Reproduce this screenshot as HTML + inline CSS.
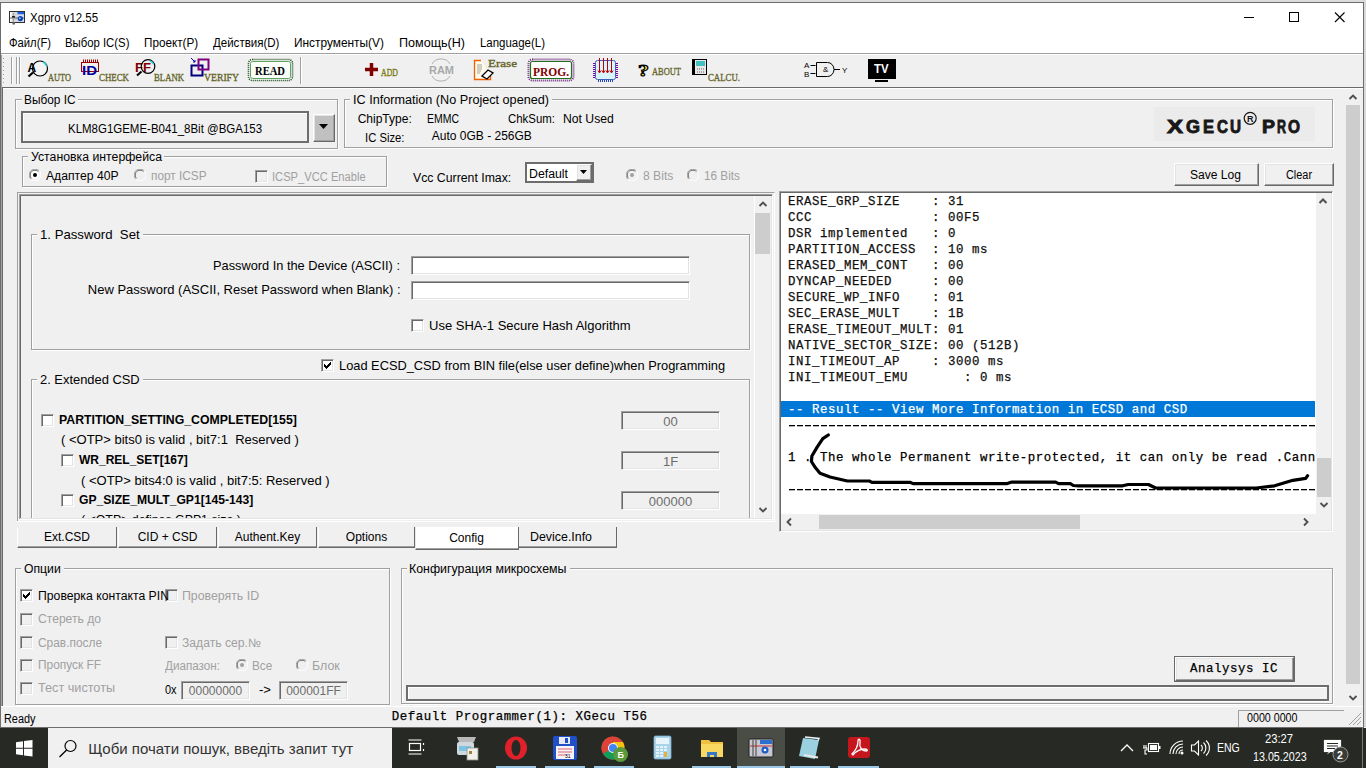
<!DOCTYPE html>
<html><head><meta charset="utf-8">
<style>
*{margin:0;padding:0;box-sizing:border-box}
html,body{width:1366px;height:768px;overflow:hidden;background:#f0f0f0;position:relative;font-family:"Liberation Sans",sans-serif;color:#000}
.a{position:absolute}
.t{position:absolute;white-space:pre}
</style></head><body>
<div class="a" style="left:0px;top:0px;width:1366px;height:2px;background:#dcdcdc"></div>
<div class="a" style="left:1364px;top:0px;width:2px;height:727px;background:#d9d9d9"></div>
<div class="a" style="left:0px;top:2px;width:1364px;height:725px;border:1px solid #6d6d6d;box-shadow:inset 1px 0 0 #a0a0a0;background:#f0f0f0"></div>
<div class="a" style="left:1px;top:3px;width:1362px;height:50px;background:#fff"></div>
<div class="a" style="left:1px;top:53px;width:1362px;height:1px;background:#a0a0a0"></div>
<div class="a" style="left:1px;top:54px;width:1362px;height:1px;background:#fff"></div>
<div class="a" style="left:2px;top:87px;width:1361px;height:1px;background:#696969"></div>
<div class="a" style="left:2px;top:87px;width:1px;height:620px;background:#696969"></div>
<div class="a" style="left:3px;top:88px;width:1360px;height:1px;background:#fff"></div>
<svg class="a" style="left:0;top:0" width="40" height="30" viewBox="0 0 40 30">
<rect x="9.5" y="11.5" width="15" height="11" fill="#d8d8dc" stroke="#303030" stroke-width="1"/>
<rect x="10" y="12" width="1.5" height="10" fill="#fff"/>
<rect x="17.5" y="12" width="6.5" height="2.5" fill="#1a60e0"/>
<rect x="17.5" y="14.5" width="6.5" height="7.5" fill="#d0dcf0"/>
<path d="M10 18 H24" stroke="#505050" stroke-width="0.8"/>
<circle cx="20.3" cy="18.6" r="2.6" fill="#0a40b0"/><circle cx="19.8" cy="18.2" r="1" fill="#80c8ff"/>
<rect x="12" y="16" width="3" height="1.6" fill="#202020"/>
<rect x="12.5" y="22" width="2.5" height="2.5" fill="#606060"/>
<path d="M13.5 13v3 M13.5 18v4" stroke="#a0a0a0" stroke-width="1.2"/>
</svg>
<svg class="a" style="left:1236px;top:8px" width="120" height="20">
<path d="M8 9.5 H18" stroke="#000" stroke-width="1"/>
<rect x="53.5" y="4.5" width="9" height="9" fill="none" stroke="#000" stroke-width="1"/>
<path d="M99 4.5 L108.5 14 M108.5 4.5 L99 14" stroke="#000" stroke-width="1.1"/>
</svg>
<div class="a" style="left:16px;top:100px;width:323px;height:50px;border:1px solid #fff"></div>
<div class="a" style="left:15px;top:99px;width:323px;height:50px;border:1px solid #a0a0a0"></div>
<div class="a" style="left:22px;top:98px;width:56px;height:4px;background:#f0f0f0"></div>
<div class="a" style="left:21px;top:111px;width:288px;height:32px;border:2px solid #6d6d6d;box-shadow:inset 1px 1px 0 #fff;background:#f0f0f0"></div>
<div class="a" style="left:313px;top:114px;width:22px;height:28px;background:#c0c0c0;border-style:solid;border-width:1px;border-color:#fff #696969 #696969 #fff;box-shadow:inset -1px -1px 0 #a0a0a0,inset 1px 1px 0 #e3e3e3"></div>
<svg class="a" style="left:319px;top:124px" width="10" height="6"><path d="M0 0 H9 L4.5 5 Z" fill="#000"/></svg>
<div class="a" style="left:23px;top:157px;width:365px;height:31px;border:1px solid #fff"></div>
<div class="a" style="left:22px;top:156px;width:365px;height:31px;border:1px solid #a0a0a0"></div>
<div class="a" style="left:28px;top:155px;width:136px;height:4px;background:#f0f0f0"></div>
<svg class="a" style="left:29px;top:169px" width="12" height="12"><path d="M10.2 1.8 A5.5 5.5 0 0 0 1.8 10.2" stroke="#a0a0a0" fill="none"/><path d="M9.4 2.6 A4.5 4.5 0 0 0 2.6 9.4" stroke="#696969" fill="none"/><path d="M1.8 10.2 A5.5 5.5 0 0 0 10.2 1.8" stroke="#fff" fill="none"/><circle cx="6" cy="6" r="4" fill="#fff"/><circle cx="6" cy="6" r="2" fill="#000"/></svg>
<svg class="a" style="left:134px;top:169px" width="12" height="12"><path d="M10.2 1.8 A5.5 5.5 0 0 0 1.8 10.2" stroke="#a0a0a0" fill="none"/><path d="M9.4 2.6 A4.5 4.5 0 0 0 2.6 9.4" stroke="#696969" fill="none"/><path d="M1.8 10.2 A5.5 5.5 0 0 0 10.2 1.8" stroke="#fff" fill="none"/><circle cx="6" cy="6" r="4" fill="#f0f0f0"/></svg>
<div class="a" style="left:255px;top:170px;width:13px;height:13px;background:#f0f0f0;border-style:solid;border-width:1px;border-color:#a0a0a0 #fff #fff #a0a0a0;box-shadow:inset 1px 1px 0 #696969,inset -1px -1px 0 #e3e3e3"></div>
<div class="a" style="left:345px;top:100px;width:989px;height:49px;border:1px solid #fff"></div>
<div class="a" style="left:344px;top:99px;width:989px;height:49px;border:1px solid #a0a0a0"></div>
<div class="a" style="left:350px;top:98px;width:202px;height:4px;background:#f0f0f0"></div>
<div class="a" style="left:1154px;top:107px;width:161px;height:34px;background:#ebebeb"></div>
<svg class="a" style="left:1150px;top:105px" width="170" height="40" viewBox="1150 105 170 40">
<text x="1167" y="133.4" font-family="Liberation Sans" font-weight="bold" font-size="18" fill="#181818" stroke="#181818" stroke-width="0.9" textLength="16" lengthAdjust="spacingAndGlyphs">X</text>
<text x="1186" y="133.4" font-family="Liberation Sans" font-weight="bold" font-size="18" fill="#181818" stroke="#181818" stroke-width="0.9" textLength="14" lengthAdjust="spacingAndGlyphs">G</text>
<text x="1203" y="133.4" font-family="Liberation Sans" font-weight="bold" font-size="18" fill="#181818" stroke="#181818" stroke-width="0.9" textLength="11" lengthAdjust="spacingAndGlyphs">E</text>
<text x="1217" y="133.4" font-family="Liberation Sans" font-weight="bold" font-size="18" fill="#181818" stroke="#181818" stroke-width="0.9" textLength="11" lengthAdjust="spacingAndGlyphs">C</text>
<text x="1230" y="133.4" font-family="Liberation Sans" font-weight="bold" font-size="18" fill="#181818" stroke="#181818" stroke-width="0.9" textLength="11" lengthAdjust="spacingAndGlyphs">U</text>
<text x="1262" y="133.4" font-family="Liberation Sans" font-weight="bold" font-size="18" fill="#181818" stroke="#181818" stroke-width="0.9" textLength="13" lengthAdjust="spacingAndGlyphs">P</text>
<text x="1277" y="133.4" font-family="Liberation Sans" font-weight="bold" font-size="18" fill="#181818" stroke="#181818" stroke-width="0.9" textLength="9" lengthAdjust="spacingAndGlyphs">R</text>
<text x="1288" y="133.4" font-family="Liberation Sans" font-weight="bold" font-size="18" fill="#181818" stroke="#181818" stroke-width="0.9" textLength="12" lengthAdjust="spacingAndGlyphs">O</text>
<circle cx="1250.2" cy="118.3" r="6" fill="none" stroke="#161616" stroke-width="1.2"/>
<text x="1246.9" y="121.6" font-family="Liberation Sans" font-weight="bold" font-size="9" fill="#161616">R</text>
</svg>
<div class="a" style="left:525px;top:162px;width:69px;height:21px;border:2px solid #6d6d6d;box-shadow:inset 1px 1px 0 #fff;background:#fff"></div>
<div class="a" style="left:576px;top:164px;width:16px;height:17px;background:#f0f0f0;border-style:solid;border-width:1px;border-color:#fff #696969 #696969 #fff;box-shadow:inset -1px -1px 0 #a0a0a0,inset 1px 1px 0 #e3e3e3"></div>
<svg class="a" style="left:580px;top:170px" width="8" height="5"><path d="M0 0 H7 L3.5 4 Z" fill="#000"/></svg>
<svg class="a" style="left:626px;top:169px" width="12" height="12"><path d="M10.2 1.8 A5.5 5.5 0 0 0 1.8 10.2" stroke="#a0a0a0" fill="none"/><path d="M9.4 2.6 A4.5 4.5 0 0 0 2.6 9.4" stroke="#696969" fill="none"/><path d="M1.8 10.2 A5.5 5.5 0 0 0 10.2 1.8" stroke="#fff" fill="none"/><circle cx="6" cy="6" r="4" fill="#f0f0f0"/><circle cx="6" cy="6" r="2" fill="#a0a0a0"/></svg>
<svg class="a" style="left:687px;top:169px" width="12" height="12"><path d="M10.2 1.8 A5.5 5.5 0 0 0 1.8 10.2" stroke="#a0a0a0" fill="none"/><path d="M9.4 2.6 A4.5 4.5 0 0 0 2.6 9.4" stroke="#696969" fill="none"/><path d="M1.8 10.2 A5.5 5.5 0 0 0 10.2 1.8" stroke="#fff" fill="none"/><circle cx="6" cy="6" r="4" fill="#f0f0f0"/></svg>
<div class="a" style="left:1174px;top:163px;width:85px;height:23px;background:#f0f0f0;border-style:solid;border-width:1px;border-color:#fff #696969 #696969 #fff;box-shadow:inset -1px -1px 0 #a0a0a0,inset 1px 1px 0 #e3e3e3"></div>
<div class="a" style="left:1264px;top:163px;width:70px;height:23px;background:#f0f0f0;border-style:solid;border-width:1px;border-color:#fff #696969 #696969 #fff;box-shadow:inset -1px -1px 0 #a0a0a0,inset 1px 1px 0 #e3e3e3"></div>
<div class="a" style="left:17px;top:192px;width:758px;height:330px;border-style:solid;border-width:1px;border-color:#a0a0a0 #fff #fff #a0a0a0"></div>
<div class="a" style="left:19px;top:194px;width:754px;height:326px;border-style:solid;border-width:1px;border-color:#a0a0a0 #fff #fff #a0a0a0;box-shadow:inset 1px 1px 0 #696969,inset -1px -1px 0 #e3e3e3;background:#f0f0f0"></div>
<div class="a" style="left:754px;top:196px;width:17px;height:322px;background:#f0f0f0;border-left:1px solid #fff"></div>
<div class="a" style="left:755px;top:213px;width:15px;height:41px;background:#cdcdcd"></div>
<svg class="a" style="left:757px;top:200px" width="12" height="8"><path d="M2.5 6 L6 2.5 L9.5 6" stroke="#505050" stroke-width="1.9" fill="none"/></svg>
<svg class="a" style="left:757px;top:506px" width="12" height="8"><path d="M2.5 2 L6 5.5 L9.5 2" stroke="#505050" stroke-width="1.9" fill="none"/></svg>
<div class="a" style="left:32px;top:235px;width:719px;height:116px;border:1px solid #fff"></div>
<div class="a" style="left:31px;top:234px;width:719px;height:116px;border:1px solid #a0a0a0"></div>
<div class="a" style="left:37px;top:233px;width:106px;height:4px;background:#f0f0f0"></div>
<div class="a" style="left:411px;top:256px;width:279px;height:19px;background:#fff;border-style:solid;border-width:1px;border-color:#a0a0a0 #fff #fff #a0a0a0;box-shadow:inset 1px 1px 0 #696969,inset -1px -1px 0 #e3e3e3"></div>
<div class="a" style="left:411px;top:281px;width:279px;height:19px;background:#fff;border-style:solid;border-width:1px;border-color:#a0a0a0 #fff #fff #a0a0a0;box-shadow:inset 1px 1px 0 #696969,inset -1px -1px 0 #e3e3e3"></div>
<div class="a" style="left:411px;top:319px;width:13px;height:13px;background:#fff;border-style:solid;border-width:1px;border-color:#a0a0a0 #fff #fff #a0a0a0;box-shadow:inset 1px 1px 0 #696969,inset -1px -1px 0 #e3e3e3"></div>
<div class="a" style="left:321px;top:359px;width:13px;height:13px;background:#fff;border-style:solid;border-width:1px;border-color:#a0a0a0 #fff #fff #a0a0a0;box-shadow:inset 1px 1px 0 #696969,inset -1px -1px 0 #e3e3e3"></div>
<svg class="a" style="left:321px;top:359px" width="13" height="13" shape-rendering="crispEdges"><path d="M9 3h1v3h-1zM8 4h1v3h-1zM7 5h1v3h-1zM6 6h1v3h-1zM5 7h1v3h-1zM4 6h1v3h-1zM3 5h1v3h-1z" fill="#000"/></svg>
<div class="a" style="left:32px;top:380px;width:719px;height:147px;border:1px solid #fff"></div>
<div class="a" style="left:31px;top:379px;width:719px;height:147px;border:1px solid #a0a0a0"></div>
<div class="a" style="left:37px;top:378px;width:106px;height:4px;background:#f0f0f0"></div>
<div class="a" style="left:41px;top:414px;width:13px;height:13px;background:#fff;border-style:solid;border-width:1px;border-color:#a0a0a0 #fff #fff #a0a0a0;box-shadow:inset 1px 1px 0 #696969,inset -1px -1px 0 #e3e3e3"></div>
<div class="a" style="left:61px;top:454px;width:13px;height:13px;background:#fff;border-style:solid;border-width:1px;border-color:#a0a0a0 #fff #fff #a0a0a0;box-shadow:inset 1px 1px 0 #696969,inset -1px -1px 0 #e3e3e3"></div>
<div class="a" style="left:61px;top:494px;width:13px;height:13px;background:#fff;border-style:solid;border-width:1px;border-color:#a0a0a0 #fff #fff #a0a0a0;box-shadow:inset 1px 1px 0 #696969,inset -1px -1px 0 #e3e3e3"></div>
<div class="a" style="left:621px;top:411px;width:99px;height:19px;background:#f0f0f0;border-style:solid;border-width:1px;border-color:#a0a0a0 #fff #fff #a0a0a0;box-shadow:inset 1px 1px 0 #696969,inset -1px -1px 0 #e3e3e3"></div>
<div class="a" style="left:621px;top:451px;width:99px;height:19px;background:#f0f0f0;border-style:solid;border-width:1px;border-color:#a0a0a0 #fff #fff #a0a0a0;box-shadow:inset 1px 1px 0 #696969,inset -1px -1px 0 #e3e3e3"></div>
<div class="a" style="left:621px;top:491px;width:99px;height:19px;background:#f0f0f0;border-style:solid;border-width:1px;border-color:#a0a0a0 #fff #fff #a0a0a0;box-shadow:inset 1px 1px 0 #696969,inset -1px -1px 0 #e3e3e3"></div>
<div class="a" style="left:17px;top:527px;width:100px;height:21px;background:#f0f0f0;border-left:1px solid #fff;border-right:1px solid #696969;border-bottom:1px solid #696969;box-shadow:inset 0 -1px 0 #a0a0a0"></div>
<div class="a" style="left:118px;top:527px;width:99px;height:21px;background:#f0f0f0;border-left:1px solid #fff;border-right:1px solid #696969;border-bottom:1px solid #696969;box-shadow:inset 0 -1px 0 #a0a0a0"></div>
<div class="a" style="left:218px;top:527px;width:99px;height:21px;background:#f0f0f0;border-left:1px solid #fff;border-right:1px solid #696969;border-bottom:1px solid #696969;box-shadow:inset 0 -1px 0 #a0a0a0"></div>
<div class="a" style="left:318px;top:527px;width:97px;height:21px;background:#f0f0f0;border-left:1px solid #fff;border-right:1px solid #696969;border-bottom:1px solid #696969;box-shadow:inset 0 -1px 0 #a0a0a0"></div>
<div class="a" style="left:518px;top:527px;width:99px;height:21px;background:#f0f0f0;border-left:1px solid #fff;border-right:1px solid #696969;border-bottom:1px solid #696969;box-shadow:inset 0 -1px 0 #a0a0a0"></div>
<div class="a" style="left:415px;top:526px;width:104px;height:24px;background:#fff;border-left:1px solid #e8e8e8;border-right:1px solid #696969;border-bottom:1px solid #696969;box-shadow:inset 0 -1px 0 #a0a0a0"></div>
<div class="a" style="left:779px;top:191px;width:554px;height:341px;background:#fff;border-style:solid;border-width:1px;border-color:#a0a0a0 #fff #fff #a0a0a0;box-shadow:inset 1px 1px 0 #696969,inset -1px -1px 0 #e3e3e3"></div>
<div class="a" style="left:1316px;top:193px;width:15px;height:337px;background:#f0f0f0"></div>
<div class="a" style="left:1317px;top:458px;width:14px;height:39px;background:#cdcdcd"></div>
<svg class="a" style="left:1317px;top:197px" width="12" height="8"><path d="M2.5 6 L6 2.5 L9.5 6" stroke="#505050" stroke-width="2" fill="none"/></svg>
<svg class="a" style="left:1318px;top:501px" width="12" height="8"><path d="M2.5 2 L6 5.5 L9.5 2" stroke="#505050" stroke-width="1.9" fill="none"/></svg>
<div class="a" style="left:781px;top:514px;width:535px;height:16px;background:#f0f0f0"></div>
<div class="a" style="left:819px;top:515px;width:261px;height:14px;background:#cdcdcd"></div>
<svg class="a" style="left:785px;top:516px" width="8" height="12"><path d="M6 2.5 L2.5 6 L6 9.5" stroke="#505050" stroke-width="1.9" fill="none"/></svg>
<svg class="a" style="left:1302px;top:516px" width="8" height="12"><path d="M2 2.5 L5.5 6 L2 9.5" stroke="#505050" stroke-width="1.9" fill="none"/></svg>
<div class="a" style="left:781px;top:401px;width:534px;height:16px;background:#0078d7"></div>
<div class="a" style="left:789px;top:425px;width:527px;height:1px;background:repeating-linear-gradient(90deg,#000 0,#000 6px,transparent 6px,transparent 8px)"></div>
<div class="a" style="left:789px;top:426px;width:527px;height:1px;background:repeating-linear-gradient(90deg,#000 0,#000 6px,transparent 6px,transparent 8px);opacity:.3"></div>
<div class="a" style="left:789px;top:489px;width:527px;height:1px;background:repeating-linear-gradient(90deg,#000 0,#000 6px,transparent 6px,transparent 8px)"></div>
<div class="a" style="left:789px;top:490px;width:527px;height:1px;background:repeating-linear-gradient(90deg,#000 0,#000 6px,transparent 6px,transparent 8px);opacity:.3"></div>
<div class="a" style="left:1345px;top:89px;width:16px;height:617px;background:#f0f0f0"></div>
<div class="a" style="left:1346px;top:105px;width:14px;height:579px;background:#cdcdcd"></div>
<svg class="a" style="left:1347px;top:93px" width="12" height="8"><path d="M2.5 6 L6 2.5 L9.5 6" stroke="#505050" stroke-width="1.9" fill="none"/></svg>
<svg class="a" style="left:1347px;top:694px" width="12" height="8"><path d="M2.5 2 L6 5.5 L9.5 2" stroke="#505050" stroke-width="1.9" fill="none"/></svg>
<div class="a" style="left:16px;top:569px;width:375px;height:137px;border:1px solid #fff"></div>
<div class="a" style="left:15px;top:568px;width:375px;height:137px;border:1px solid #a0a0a0"></div>
<div class="a" style="left:21px;top:567px;width:43px;height:4px;background:#f0f0f0"></div>
<div class="a" style="left:20px;top:589px;width:13px;height:13px;background:#fff;border-style:solid;border-width:1px;border-color:#a0a0a0 #fff #fff #a0a0a0;box-shadow:inset 1px 1px 0 #696969,inset -1px -1px 0 #e3e3e3"></div>
<svg class="a" style="left:20px;top:589px" width="13" height="13" shape-rendering="crispEdges"><path d="M9 3h1v3h-1zM8 4h1v3h-1zM7 5h1v3h-1zM6 6h1v3h-1zM5 7h1v3h-1zM4 6h1v3h-1zM3 5h1v3h-1z" fill="#000"/></svg>
<div class="a" style="left:165px;top:589px;width:13px;height:13px;background:#f0f0f0;border-style:solid;border-width:1px;border-color:#a0a0a0 #fff #fff #a0a0a0;box-shadow:inset 1px 1px 0 #696969,inset -1px -1px 0 #e3e3e3"></div>
<div class="a" style="left:20px;top:613px;width:13px;height:13px;background:#f0f0f0;border-style:solid;border-width:1px;border-color:#a0a0a0 #fff #fff #a0a0a0;box-shadow:inset 1px 1px 0 #696969,inset -1px -1px 0 #e3e3e3"></div>
<div class="a" style="left:20px;top:636px;width:13px;height:13px;background:#f0f0f0;border-style:solid;border-width:1px;border-color:#a0a0a0 #fff #fff #a0a0a0;box-shadow:inset 1px 1px 0 #696969,inset -1px -1px 0 #e3e3e3"></div>
<div class="a" style="left:20px;top:659px;width:13px;height:13px;background:#f0f0f0;border-style:solid;border-width:1px;border-color:#a0a0a0 #fff #fff #a0a0a0;box-shadow:inset 1px 1px 0 #696969,inset -1px -1px 0 #e3e3e3"></div>
<div class="a" style="left:20px;top:682px;width:13px;height:13px;background:#f0f0f0;border-style:solid;border-width:1px;border-color:#a0a0a0 #fff #fff #a0a0a0;box-shadow:inset 1px 1px 0 #696969,inset -1px -1px 0 #e3e3e3"></div>
<div class="a" style="left:165px;top:636px;width:13px;height:13px;background:#f0f0f0;border-style:solid;border-width:1px;border-color:#a0a0a0 #fff #fff #a0a0a0;box-shadow:inset 1px 1px 0 #696969,inset -1px -1px 0 #e3e3e3"></div>
<svg class="a" style="left:236px;top:659px" width="12" height="12"><path d="M10.2 1.8 A5.5 5.5 0 0 0 1.8 10.2" stroke="#a0a0a0" fill="none"/><path d="M9.4 2.6 A4.5 4.5 0 0 0 2.6 9.4" stroke="#696969" fill="none"/><path d="M1.8 10.2 A5.5 5.5 0 0 0 10.2 1.8" stroke="#fff" fill="none"/><circle cx="6" cy="6" r="4" fill="#f0f0f0"/><circle cx="6" cy="6" r="2" fill="#a0a0a0"/></svg>
<svg class="a" style="left:296px;top:659px" width="12" height="12"><path d="M10.2 1.8 A5.5 5.5 0 0 0 1.8 10.2" stroke="#a0a0a0" fill="none"/><path d="M9.4 2.6 A4.5 4.5 0 0 0 2.6 9.4" stroke="#696969" fill="none"/><path d="M1.8 10.2 A5.5 5.5 0 0 0 10.2 1.8" stroke="#fff" fill="none"/><circle cx="6" cy="6" r="4" fill="#f0f0f0"/></svg>
<div class="a" style="left:181px;top:681px;width:69px;height:19px;background:#f0f0f0;border-style:solid;border-width:1px;border-color:#a0a0a0 #fff #fff #a0a0a0;box-shadow:inset 1px 1px 0 #696969,inset -1px -1px 0 #e3e3e3"></div>
<div class="a" style="left:279px;top:681px;width:69px;height:19px;background:#f0f0f0;border-style:solid;border-width:1px;border-color:#a0a0a0 #fff #fff #a0a0a0;box-shadow:inset 1px 1px 0 #696969,inset -1px -1px 0 #e3e3e3"></div>
<div class="a" style="left:402px;top:569px;width:932px;height:136px;border:1px solid #fff"></div>
<div class="a" style="left:401px;top:568px;width:932px;height:136px;border:1px solid #a0a0a0"></div>
<div class="a" style="left:407px;top:567px;width:163px;height:4px;background:#f0f0f0"></div>
<div class="a" style="left:1174px;top:656px;width:121px;height:26px;border:1px solid #696969"></div>
<div class="a" style="left:1175px;top:657px;width:119px;height:24px;background:#f0f0f0;border-style:solid;border-width:1px;border-color:#fff #696969 #696969 #fff;box-shadow:inset -1px -1px 0 #a0a0a0,inset 1px 1px 0 #e3e3e3"></div>
<div class="a" style="left:406px;top:685px;width:923px;height:16px;border:2px solid #6d6d6d;box-shadow:inset 1px 1px 0 #fff,0 1px 0 #fff;background:#f0f0f0"></div>
<div class="a" style="left:1px;top:706px;width:1362px;height:21px;background:#f0f0f0;border-top:1px solid #fff"></div>
<div class="a" style="left:1238px;top:710px;width:106px;height:17px;border-top:1px solid #a0a0a0;border-left:1px solid #a0a0a0"></div>
<svg class="a" style="left:1348px;top:712px" width="14" height="14"><path d="M13 1 L1 13 M13 5 L5 13 M13 9 L9 13" stroke="#a0a0a0" stroke-width="1" fill="none"/></svg>
<div class="a" style="left:0px;top:727px;width:1364px;height:1px;background:#6d6d6d"></div>
<div class="a" style="left:0px;top:728px;width:1366px;height:40px;background:#272a24"></div>
<div class="a" style="left:48px;top:728px;width:344px;height:40px;background:#f0f0f0"></div>
<svg class="a" style="left:16px;top:740px" width="17" height="17"><path d="M0 2.2 L7 1.2 V7.8 H0Z M8 1 L16.5 0 V7.8 H8Z M0 8.8 H7 V15.3 L0 14.3Z M8 8.8 H16.5 V16.5 L8 15.4Z" fill="#fff"/></svg>
<svg class="a" style="left:58px;top:739px" width="20" height="19"><circle cx="12.5" cy="7" r="5.5" stroke="#000" stroke-width="1.2" fill="none"/><path d="M8.6 11 L1.5 18" stroke="#000" stroke-width="1.3"/></svg>
<svg class="a" style="left:406px;top:739px" width="19" height="16"><path d="M2.5 1 H15.5 M2.5 15 H15.5" stroke="#fff" stroke-width="1.2"/><rect x="3.5" y="4.5" width="11" height="7" stroke="#fff" stroke-width="1.2" fill="none"/><path d="M17.5 4 V6 M17.5 10 V12" stroke="#fff" stroke-width="1.2"/></svg>
<div class="a" style="left:737px;top:728px;width:48px;height:40px;background:#4a4c46"></div>
<div class="a" style="left:496px;top:766px;width:40px;height:2px;background:#9cc8e8"></div>
<div class="a" style="left:545px;top:766px;width:40px;height:2px;background:#9cc8e8"></div>
<div class="a" style="left:594px;top:766px;width:40px;height:2px;background:#9cc8e8"></div>
<div class="a" style="left:692px;top:766px;width:39px;height:2px;background:#9cc8e8"></div>
<div class="a" style="left:737px;top:766px;width:48px;height:2px;background:#9cc8e8"></div>
<div class="a" style="left:790px;top:766px;width:40px;height:2px;background:#9cc8e8"></div>
<div class="a" style="left:838px;top:766px;width:41px;height:2px;background:#9cc8e8"></div>
<svg class="a" style="left:0;top:727px" width="1366" height="41" viewBox="0 727 1366 41">
<!-- scanner -->
<path d="M457 737 h19 l-2 5 h-15 z" fill="#b8b8b8"/>
<rect x="457" y="742" width="17" height="13" rx="2" fill="#d0d8dc"/>
<rect x="459" y="746" width="12" height="5" fill="#7cc4e4"/>
<rect x="467" y="748" width="11" height="12" fill="#f0f0e8" stroke="#909090" stroke-width="0.8"/>
<rect x="469" y="751" width="3" height="3" fill="#a08040"/>
<!-- opera -->
<ellipse cx="516" cy="748" rx="11" ry="11.5" fill="#e0202a"/>
<ellipse cx="516" cy="748" rx="4.5" ry="8" fill="#272a24"/>
<!-- floppy -->
<rect x="553" y="736" width="24" height="24" rx="2" fill="#2050c8"/>
<rect x="559" y="737" width="11" height="7" fill="#e8e8f0"/><rect x="565" y="738" width="3" height="5" fill="#2050c8"/>
<rect x="556" y="746" width="18" height="13" fill="#f4f4f8"/>
<path d="M558 749 h14 M558 752 h14 M558 755 h9" stroke="#e06070" stroke-width="1"/>
<text x="565" y="758" font-family="Liberation Sans" font-size="5" fill="#000">31</text>
<!-- chrome -->
<circle cx="613" cy="748" r="11.5" fill="#db4437"/>
<path d="M613 748 L603.05 753.75 A11.5 11.5 0 0 1 613 736.5 Z" fill="#db4437"/>
<path d="M613 748 L603.05 753.75 A11.5 11.5 0 0 0 622.95 753.75 Z" fill="#0f9d58"/>
<path d="M613 748 L624.5 748 A11.5 11.5 0 0 0 623 742 L613 742Z" fill="#f4c20d"/>
<circle cx="613" cy="748" r="5" fill="#fff"/><circle cx="613" cy="748" r="4" fill="#4285f4"/>
<circle cx="620.5" cy="754.5" r="7.5" fill="#5a9a3a"/>
<text x="617.5" y="758" font-family="Liberation Sans" font-weight="bold" font-size="9" fill="#fff">Б</text>
<!-- calculator -->
<rect x="654" y="736" width="17" height="23" rx="1.5" fill="#a8d4ec" stroke="#80b0d0" stroke-width="0.8"/>
<rect x="656" y="738" width="13" height="6" fill="#e8f4fc"/>
<path d="M656 747h3M660 747h3M664 747h3 M656 750h3M660 750h3M664 750h3 M656 753h3M660 753h3M664 753h3 M656 756h3M660 756h3" stroke="#f8fcff" stroke-width="1.5"/>
<rect x="664" y="752" width="3" height="5" fill="#e8b040"/>
<!-- folder -->
<path d="M701 740 h8 l2 2 h12 v15 h-22 z" fill="#f0c040"/>
<rect x="701" y="744" width="22" height="13" fill="#f8d860"/>
<path d="M707 757 v-5 h10 v5 h-3 v-2 h-4 v2 z" fill="#3878c8"/>
<!-- xgpro -->
<rect x="749" y="739" width="24" height="18" rx="1" fill="#c8c8d0" stroke="#202020" stroke-width="1"/>
<rect x="760" y="740" width="12" height="4" fill="#2a6fd0"/>
<path d="M750 746 h22" stroke="#d03030" stroke-width="1"/>
<circle cx="765" cy="750" r="3.5" fill="#1a5cc8"/><circle cx="765" cy="750" r="1.3" fill="#fff"/>
<path d="M753 740 v16 M756 740 v16" stroke="#404040" stroke-width="1"/>
<!-- notepad -->
<path d="M803 738 l16 2 l-4 19 l-16 -3 z" fill="#9ad0e0"/>
<path d="M805 737 l14 1.5 l-1 2" stroke="#e8f4f8" stroke-width="1.5" fill="none"/>
<path d="M804 755 l14 2.5" stroke="#e8e8e8" stroke-width="2"/>
<!-- acrobat -->
<rect x="848" y="737" width="22" height="21" rx="3" fill="#c4161c"/>
<path d="M852 754 C856 750 858 745 858 741 C858 738 861 739 860 743 C859 747 862 751 866 751 C868 751 868 749 864 749 C860 749 855 752 853 755 Z" fill="none" stroke="#fff" stroke-width="1.3"/>
<!-- tray -->
<path d="M1121 751 L1127 745 L1133 751" stroke="#fff" stroke-width="1.3" fill="none"/>
<path d="M1144 745 v3 M1146 745 v3 M1143 748 h4 v2 h-2 v4 h2" stroke="#fff" stroke-width="1.1" fill="none"/>
<rect x="1148.5" y="743.5" width="10" height="8" stroke="#fff" stroke-width="1.1" fill="none"/>
<rect x="1150" y="745" width="7" height="5" fill="#fff"/>
<rect x="1159" y="746" width="1.5" height="3" fill="#fff"/>
<path d="M1170 754 A13 13 0 0 1 1183 741 M1173 754 A10 10 0 0 1 1183 744 M1176 754 A7 7 0 0 1 1183 747 M1179 754 A4 4 0 0 1 1183 750" stroke="#fff" stroke-width="1.1" fill="none"/>
<circle cx="1182" cy="753" r="1.5" fill="#fff"/>
<path d="M1191.5 745 h3 l4 -4 v14 l-4 -4 h-3 z" stroke="#fff" stroke-width="1.1" fill="none"/>
<path d="M1201 745 A4 4 0 0 1 1201 751 M1203.5 742.5 A7.5 7.5 0 0 1 1203.5 753.5 M1206 740.5 A10 10 0 0 1 1206 755.5" stroke="#fff" stroke-width="1.1" fill="none"/>
<rect x="1324.5" y="740.5" width="16" height="11" stroke="#fff" stroke-width="1.2" fill="#fff"/>
<path d="M1327 743.5 h11 M1327 746 h11 M1327 748.5 h8" stroke="#272a24" stroke-width="1"/>
<path d="M1329 751.5 l-2 3 l4 -3z" fill="#fff"/>
<circle cx="1340.5" cy="754.5" r="7.5" fill="#3a3c38" stroke="#9a9a9a" stroke-width="1"/>
<text x="1337" y="758.5" font-family="Liberation Sans" font-weight="bold" font-size="10.5" fill="#fff">2</text>
<rect x="1362" y="727" width="1" height="41" fill="#7a7a7a"/>
</svg>
<!-- toolbar -->
<svg class="a" style="left:0;top:54px" width="1366" height="34" viewBox="0 54 1366 34">
<g fill="#a0a0a0">
<rect x="3" y="58" width="1" height="1"/><rect x="3" y="62" width="1" height="1"/><rect x="3" y="66" width="1" height="1"/><rect x="3" y="70" width="1" height="1"/><rect x="3" y="74" width="1" height="1"/><rect x="3" y="78" width="1" height="1"/><rect x="3" y="82" width="1" height="1"/>
</g>
<rect x="11" y="57" width="1" height="27" fill="#a0a0a0"/><rect x="12" y="57" width="1" height="27" fill="#fff"/>
<rect x="16" y="57" width="1" height="27" fill="#a0a0a0"/><rect x="17" y="57" width="1" height="27" fill="#fff"/>
<rect x="19" y="57" width="1" height="27" fill="#a0a0a0"/><rect x="20" y="57" width="1" height="27" fill="#fff"/>
<g font-family="Liberation Serif" font-size="11" fill="#66662a" stroke="#66662a" stroke-width="0.35">
<text x="48" y="80.5" textLength="23" lengthAdjust="spacingAndGlyphs">AUTO</text>
<text x="99" y="80.5" textLength="30" lengthAdjust="spacingAndGlyphs">CHECK</text>
<text x="154" y="80.5" textLength="30" lengthAdjust="spacingAndGlyphs">BLANK</text>
<text x="204" y="80.5" textLength="35" lengthAdjust="spacingAndGlyphs">VERIFY</text>
<text x="381" y="76" textLength="17" lengthAdjust="spacingAndGlyphs" fill="#7a7a10" stroke="#7a7a10">ADD</text>
<text x="488" y="66.5" textLength="29" lengthAdjust="spacingAndGlyphs">Erase</text>
<text x="652" y="75" textLength="29" lengthAdjust="spacingAndGlyphs">ABOUT</text>
<text x="708" y="80.5" textLength="32" lengthAdjust="spacingAndGlyphs">CALCU.</text>
</g>
<!-- AUTO icon -->
<circle cx="40" cy="68.5" r="7.5" fill="#f4f4f4" stroke="#000" stroke-width="1.2"/>
<path d="M43 62 A7 7 0 0 1 46.5 66" stroke="#30d0d0" stroke-width="1.6" fill="none"/>
<path d="M28.5 76.5 L33 72.5" stroke="#000" stroke-width="2.2"/>
<text x="27.5" y="72" font-family="Liberation Sans" font-weight="bold" font-size="12" fill="#000">A</text>
<!-- CHECK icon -->
<rect x="81.5" y="62.5" width="17" height="9" fill="none" stroke="#a00000" stroke-width="1"/>
<path d="M83.5 62v-2.5M85.5 62v-2.5M87.5 62v-2.5M89.5 62v-2.5M91.5 62v-2.5M93.5 62v-2.5M95.5 62v-2.5M97.5 62v-2.5" stroke="#a00000" stroke-width="1"/>
<text x="82" y="75" font-family="Liberation Sans" font-weight="bold" font-size="13" fill="#0000a0" textLength="15" lengthAdjust="spacingAndGlyphs">ID</text>
<!-- BLANK icon -->
<text x="135" y="71.5" font-family="Liberation Sans" font-weight="bold" font-size="12" fill="#800000" textLength="16" lengthAdjust="spacingAndGlyphs">FF</text>
<circle cx="148" cy="66.5" r="6.8" fill="none" stroke="#000" stroke-width="1.2"/>
<path d="M150 61 A6 6 0 0 1 153.5 64" stroke="#30d0d0" stroke-width="1.5" fill="none"/>
<path d="M137 75.5 L141.5 71.5" stroke="#000" stroke-width="2"/>
<!-- VERIFY icon -->
<rect x="191.5" y="65.5" width="11" height="10" fill="none" stroke="#000080" stroke-width="2"/>
<rect x="198.5" y="59.5" width="10" height="10" fill="none" stroke="#800080" stroke-width="2"/>
<path d="M191 58 L195 62 M195 60v2h-2" stroke="#0000c0" stroke-width="1" fill="none"/>
<!-- READ -->
<rect x="248.5" y="59.5" width="44" height="21" rx="4" fill="#f4fff4" stroke="#1a401a" stroke-width="1.6" stroke-dasharray="1 1"/>
<rect x="250.5" y="61.5" width="40" height="17" rx="2" fill="#fafffa" stroke="#60a060" stroke-width="1"/>
<text x="255" y="75" font-family="Liberation Serif" font-weight="bold" font-size="11.5" fill="#000" textLength="30" lengthAdjust="spacingAndGlyphs">READ</text>
<!-- separator -->
<rect x="300" y="57" width="1" height="27" fill="#a0a0a0"/><rect x="301" y="57" width="1" height="27" fill="#fff"/>
<!-- ADD -->
<path d="M365 69.5 H378 M371.5 63 V76" stroke="#800000" stroke-width="3.5"/>
<!-- RAM -->
<path d="M432 64 A10 9 0 0 1 450 64" stroke="#b0b0b0" stroke-width="1" fill="none"/>
<path d="M450 76 A10 9 0 0 1 432 76" stroke="#b0b0b0" stroke-width="1" fill="none"/>
<text x="429" y="74" font-family="Liberation Sans" font-weight="bold" font-size="10" fill="#a8a8a8" textLength="25" lengthAdjust="spacingAndGlyphs">RAM</text>
<!-- Erase icon -->
<path d="M481 60.5 H474.5 V79.5 H490.5 V76" stroke="#f06000" stroke-width="1.3" fill="#fffbe8"/>
<path d="M477 65h5M477 67h5M477 69h5M477 71h4M477 73h3" stroke="#a0a0a0" stroke-width="1"/>
<path d="M482 76 L488 70 L493 73 L487 79 Z" fill="#fff" stroke="#000" stroke-width="1.3"/>
<!-- PROG -->
<rect x="528.5" y="59.5" width="45" height="21" rx="4" fill="#f4fff4" stroke="#702080" stroke-width="2" stroke-dasharray="1 1"/>
<rect x="530.5" y="61.5" width="41" height="17" rx="2" fill="#fff" stroke="#207020" stroke-width="1.2"/>
<text x="533" y="75.5" font-family="Liberation Serif" font-weight="bold" font-size="12" fill="#800000" textLength="36" lengthAdjust="spacingAndGlyphs">PROG.</text>
<!-- chip icon -->
<rect x="595.5" y="60.5" width="20" height="19" rx="2" fill="#d8f4fc" stroke="#4060c0" stroke-width="1"/>
<path d="M593 63.5h2M593 65.5h2M593 67.5h2M593 69.5h2M593 71.5h2M593 73.5h2M593 75.5h2M593 77.5h2M616 63.5h2M616 65.5h2M616 67.5h2M616 69.5h2M616 71.5h2M616 73.5h2M616 75.5h2M616 77.5h2" stroke="#8000a0" stroke-width="1"/>
<path d="M598.5 80v2M600.5 80v2M602.5 80v2M604.5 80v2M606.5 80v2M608.5 80v2M610.5 80v2M612.5 80v2" stroke="#2040c0" stroke-width="1"/>
<path d="M599.5 58v14M603.5 58v14M607.5 58v14M611.5 58v14" stroke="#c00000" stroke-width="1"/>
<path d="M598 70.5l1.5 2.5l1.5-2.5M602 70.5l1.5 2.5l1.5-2.5M606 70.5l1.5 2.5l1.5-2.5M610 70.5l1.5 2.5l1.5-2.5" stroke="#c00000" stroke-width="1" fill="none"/>
<!-- ABOUT ? -->
<text x="638" y="75.5" font-family="Liberation Serif" font-weight="bold" font-size="16" fill="#f0e040" stroke="#000" stroke-width="1" textLength="11" lengthAdjust="spacingAndGlyphs">?</text>
<!-- CALC icon -->
<rect x="692" y="59" width="15" height="16" fill="#000"/>
<rect x="695" y="60" width="11" height="14" fill="#e8e8e8"/>
<rect x="696" y="61" width="9" height="5" fill="#40c0c0"/>
<path d="M697 69h1M699 69h1M701 69h1M703 69h1M697 72h1M699 72h1M701 72h1M703 72h1" stroke="#606060"/>
<!-- gate -->
<g font-family="Liberation Sans" font-size="8" fill="#000">
<text x="804" y="68">A</text><text x="804" y="77">B</text><text x="842" y="72.5">Y</text>
<text x="823" y="72" font-size="8">&amp;</text>
</g>
<path d="M810.5 65.5h5M810.5 73.5h5M816.5 62.5h11a6.5 7 0 0 1 0 14h-11z M834 69.5h6" stroke="#000" stroke-width="1" fill="none"/>
<!-- TV -->
<rect x="868" y="59" width="28" height="20" fill="#000"/>
<rect x="875" y="80" width="13" height="2" fill="#000"/>
<text x="874" y="73.2" font-family="Liberation Sans" font-weight="bold" font-size="12" fill="#fff" textLength="14.5" lengthAdjust="spacingAndGlyphs">TV</text>
</svg>
<div class="t" style="left:30.0px;top:10.5px;font-size:12.00px;line-height:15px;font-family:'Liberation Sans';color:#000;transform:scaleX(0.953);transform-origin:0 50%;">Xgpro v12.55</div>
<div class="t" style="left:8.5px;top:36.0px;font-size:12.00px;line-height:15px;font-family:'Liberation Sans';color:#000;transform:scaleX(0.937);transform-origin:0 50%;">Файл(F)</div>
<div class="t" style="left:65.2px;top:36.0px;font-size:12.00px;line-height:15px;font-family:'Liberation Sans';color:#000;transform:scaleX(0.945);transform-origin:0 50%;">Выбор IC(S)</div>
<div class="t" style="left:144.2px;top:36.0px;font-size:12.00px;line-height:15px;font-family:'Liberation Sans';color:#000;transform:scaleX(0.976);transform-origin:0 50%;">Проект(P)</div>
<div class="t" style="left:213.2px;top:36.0px;font-size:12.00px;line-height:15px;font-family:'Liberation Sans';color:#000;transform:scaleX(0.959);transform-origin:0 50%;">Действия(D)</div>
<div class="t" style="left:294.3px;top:36.0px;font-size:12.00px;line-height:15px;font-family:'Liberation Sans';color:#000;transform:scaleX(0.990);transform-origin:0 50%;">Инструменты(V)</div>
<div class="t" style="left:399.0px;top:36.0px;font-size:12.00px;line-height:15px;font-family:'Liberation Sans';color:#000;transform:scaleX(1.048);transform-origin:0 50%;">Помощь(H)</div>
<div class="t" style="left:479.6px;top:36.0px;font-size:12.00px;line-height:15px;font-family:'Liberation Sans';color:#000;transform:scaleX(0.955);transform-origin:0 50%;">Language(L)</div>
<div class="t" style="left:24.0px;top:93.1px;font-size:12.00px;line-height:15px;font-family:'Liberation Sans';color:#000;transform:scaleX(0.987);transform-origin:0 50%;">Выбор IC</div>
<div class="t" style="left:68.0px;top:121.5px;font-size:12.00px;line-height:15px;font-family:'Liberation Sans';color:#000;transform:scaleX(0.956);transform-origin:0 50%;">KLM8G1GEME-B041_8Bit @BGA153</div>
<div class="t" style="left:30.7px;top:150.2px;font-size:12.00px;line-height:15px;font-family:'Liberation Sans';color:#000;transform:scaleX(1.023);transform-origin:0 50%;">Установка интерфейса</div>
<div class="t" style="left:46.0px;top:169.3px;font-size:12.00px;line-height:15px;font-family:'Liberation Sans';color:#000;transform:scaleX(1.014);transform-origin:0 50%;">Адаптер 40P</div>
<div class="t" style="left:150.8px;top:169.3px;font-size:12.00px;line-height:15px;font-family:'Liberation Sans';color:#a0a0a0;transform:scaleX(0.985);transform-origin:0 50%;">порт ICSP</div>
<div class="t" style="left:272.3px;top:169.5px;font-size:12.00px;line-height:15px;font-family:'Liberation Sans';color:#a0a0a0;transform:scaleX(0.930);transform-origin:0 50%;">ICSP_VCC Enable</div>
<div class="t" style="left:353.0px;top:93.1px;font-size:12.00px;line-height:15px;font-family:'Liberation Sans';color:#000;transform:scaleX(1.053);transform-origin:0 50%;">IC Information (No Project opened)</div>
<div class="t" style="left:357.7px;top:112.3px;font-size:12.00px;line-height:15px;font-family:'Liberation Sans';color:#000;">ChipType:</div>
<div class="t" style="left:427.0px;top:112.3px;font-size:12.00px;line-height:15px;font-family:'Liberation Sans';color:#000;transform:scaleX(0.873);transform-origin:0 50%;">EMMC</div>
<div class="t" style="left:508.0px;top:112.3px;font-size:12.00px;line-height:15px;font-family:'Liberation Sans';color:#000;transform:scaleX(0.952);transform-origin:0 50%;">ChkSum:</div>
<div class="t" style="left:563.0px;top:112.3px;font-size:12.00px;line-height:15px;font-family:'Liberation Sans';color:#000;transform:scaleX(1.016);transform-origin:0 50%;">Not Used</div>
<div class="t" style="left:365.0px;top:130.7px;font-size:12.00px;line-height:15px;font-family:'Liberation Sans';color:#000;transform:scaleX(0.938);transform-origin:0 50%;">IC Size:</div>
<div class="t" style="left:431.8px;top:129.1px;font-size:12.00px;line-height:15px;font-family:'Liberation Sans';color:#000;">Auto 0GB - 256GB</div>
<div class="t" style="left:412.5px;top:170.9px;font-size:12.00px;line-height:15px;font-family:'Liberation Sans';color:#000;transform:scaleX(1.023);transform-origin:0 50%;">Vcc Current Imax:</div>
<div class="t" style="left:529.0px;top:166.5px;font-size:12.00px;line-height:15px;font-family:'Liberation Sans';color:#000;transform:scaleX(1.026);transform-origin:0 50%;">Default</div>
<div class="t" style="left:642.7px;top:169.0px;font-size:12.00px;line-height:15px;font-family:'Liberation Sans';color:#a0a0a0;transform:scaleX(1.010);transform-origin:0 50%;">8 Bits</div>
<div class="t" style="left:704.0px;top:169.0px;font-size:12.00px;line-height:15px;font-family:'Liberation Sans';color:#a0a0a0;transform:scaleX(0.981);transform-origin:0 50%;">16 Bits</div>
<div class="t" style="left:1190.0px;top:168.0px;font-size:12.00px;line-height:15px;font-family:'Liberation Sans';color:#000;transform:scaleX(1.006);transform-origin:0 50%;">Save Log</div>
<div class="t" style="left:1286.0px;top:168.0px;font-size:12.00px;line-height:15px;font-family:'Liberation Sans';color:#000;transform:scaleX(0.907);transform-origin:0 50%;">Clear</div>
<div class="t" style="left:40.4px;top:226.5px;font-size:13.00px;line-height:16px;font-family:'Liberation Sans';color:#000;transform:scaleX(1.014);transform-origin:0 50%;">1. Password  Set</div>
<div class="t" style="left:213.0px;top:257.5px;font-size:13.00px;line-height:16px;font-family:'Liberation Sans';color:#000;transform:scaleX(0.984);transform-origin:0 50%;">Password In the Device (ASCII) :</div>
<div class="t" style="left:87.8px;top:282.4px;font-size:13.00px;line-height:16px;font-family:'Liberation Sans';color:#000;">New Password (ASCII, Reset Password when Blank) :</div>
<div class="t" style="left:429.0px;top:318.1px;font-size:13.00px;line-height:16px;font-family:'Liberation Sans';color:#000;">Use SHA-1 Secure Hash Algorithm</div>
<div class="t" style="left:339.0px;top:357.8px;font-size:13.00px;line-height:16px;font-family:'Liberation Sans';color:#000;transform:scaleX(0.986);transform-origin:0 50%;">Load ECSD_CSD from BIN file(else user define)when Programming</div>
<div class="t" style="left:40.4px;top:372.0px;font-size:13.00px;line-height:16px;font-family:'Liberation Sans';color:#000;transform:scaleX(0.992);transform-origin:0 50%;">2. Extended CSD</div>
<div class="t" style="left:59.4px;top:412.9px;font-size:12.00px;line-height:15px;font-family:'Liberation Sans';color:#000;font-weight:bold;transform:scaleX(1.023);transform-origin:0 50%;">PARTITION_SETTING_COMPLETED[155]</div>
<div class="t" style="left:61.0px;top:432.2px;font-size:13.00px;line-height:16px;font-family:'Liberation Sans';color:#000;">( &lt;OTP&gt; bits0 is valid , bit7:1  Reserved )</div>
<div class="t" style="left:79.0px;top:452.7px;font-size:12.00px;line-height:15px;font-family:'Liberation Sans';color:#000;font-weight:bold;">WR_REL_SET[167]</div>
<div class="t" style="left:81.0px;top:472.6px;font-size:13.00px;line-height:16px;font-family:'Liberation Sans';color:#000;">( &lt;OTP&gt; bits4:0 is valid , bit7:5: Reserved )</div>
<div class="t" style="left:79.0px;top:492.8px;font-size:12.00px;line-height:15px;font-family:'Liberation Sans';color:#000;font-weight:bold;transform:scaleX(1.010);transform-origin:0 50%;">GP_SIZE_MULT_GP1[145-143]</div>
<div class="t" style="left:81.0px;top:512.3px;font-size:13.00px;line-height:16px;font-family:'Liberation Sans';color:#000;transform:scaleX(0.950);transform-origin:0 50%;">( &lt;OTP&gt; defines GPP1 size )</div>
<div class="t" style="left:621.0px;top:413.8px;font-size:13.00px;line-height:16px;font-family:'Liberation Sans';color:#6d6d6d;width:99px;text-align:center;">00</div>
<div class="t" style="left:621.0px;top:453.8px;font-size:13.00px;line-height:16px;font-family:'Liberation Sans';color:#6d6d6d;width:99px;text-align:center;">1F</div>
<div class="t" style="left:621.0px;top:493.8px;font-size:13.00px;line-height:16px;font-family:'Liberation Sans';color:#6d6d6d;width:99px;text-align:center;">000000</div>
<div class="t" style="left:17.0px;top:529.5px;font-size:12.00px;line-height:15px;font-family:'Liberation Sans';color:#000;width:100px;text-align:center;">Ext.CSD</div>
<div class="t" style="left:118.0px;top:529.5px;font-size:12.00px;line-height:15px;font-family:'Liberation Sans';color:#000;width:99px;text-align:center;">CID + CSD</div>
<div class="t" style="left:218.0px;top:529.5px;font-size:12.00px;line-height:15px;font-family:'Liberation Sans';color:#000;width:99px;text-align:center;">Authent.Key</div>
<div class="t" style="left:318.0px;top:529.5px;font-size:12.00px;line-height:15px;font-family:'Liberation Sans';color:#000;width:97px;text-align:center;">Options</div>
<div class="t" style="left:530.0px;top:529.5px;font-size:12.00px;line-height:15px;font-family:'Liberation Sans';color:#000;transform:scaleX(1.033);transform-origin:0 50%;">Device.Info</div>
<div class="t" style="left:415.0px;top:530.5px;font-size:12.00px;line-height:15px;font-family:'Liberation Sans';color:#000;width:103px;text-align:center;">Config</div>
<div class="t" style="left:788.0px;top:193.8px;font-size:12.40px;line-height:16px;font-family:'Liberation Mono';color:#101010;letter-spacing:0.56px;-webkit-text-stroke:0.25px;">ERASE_GRP_SIZE    : 31</div>
<div class="t" style="left:788.0px;top:209.8px;font-size:12.40px;line-height:16px;font-family:'Liberation Mono';color:#101010;letter-spacing:0.56px;-webkit-text-stroke:0.25px;">CCC               : 00F5</div>
<div class="t" style="left:788.0px;top:225.8px;font-size:12.40px;line-height:16px;font-family:'Liberation Mono';color:#101010;letter-spacing:0.56px;-webkit-text-stroke:0.25px;">DSR implemented   : 0</div>
<div class="t" style="left:788.0px;top:241.8px;font-size:12.40px;line-height:16px;font-family:'Liberation Mono';color:#101010;letter-spacing:0.56px;-webkit-text-stroke:0.25px;">PARTITION_ACCESS  : 10 ms</div>
<div class="t" style="left:788.0px;top:257.8px;font-size:12.40px;line-height:16px;font-family:'Liberation Mono';color:#101010;letter-spacing:0.56px;-webkit-text-stroke:0.25px;">ERASED_MEM_CONT   : 00</div>
<div class="t" style="left:788.0px;top:273.8px;font-size:12.40px;line-height:16px;font-family:'Liberation Mono';color:#101010;letter-spacing:0.56px;-webkit-text-stroke:0.25px;">DYNCAP_NEEDED     : 00</div>
<div class="t" style="left:788.0px;top:289.8px;font-size:12.40px;line-height:16px;font-family:'Liberation Mono';color:#101010;letter-spacing:0.56px;-webkit-text-stroke:0.25px;">SECURE_WP_INFO    : 01</div>
<div class="t" style="left:788.0px;top:305.8px;font-size:12.40px;line-height:16px;font-family:'Liberation Mono';color:#101010;letter-spacing:0.56px;-webkit-text-stroke:0.25px;">SEC_ERASE_MULT    : 1B</div>
<div class="t" style="left:788.0px;top:321.8px;font-size:12.40px;line-height:16px;font-family:'Liberation Mono';color:#101010;letter-spacing:0.56px;-webkit-text-stroke:0.25px;">ERASE_TIMEOUT_MULT: 01</div>
<div class="t" style="left:788.0px;top:337.8px;font-size:12.40px;line-height:16px;font-family:'Liberation Mono';color:#101010;letter-spacing:0.56px;-webkit-text-stroke:0.25px;">NATIVE_SECTOR_SIZE: 00 (512B)</div>
<div class="t" style="left:788.0px;top:353.8px;font-size:12.40px;line-height:16px;font-family:'Liberation Mono';color:#101010;letter-spacing:0.56px;-webkit-text-stroke:0.25px;">INI_TIMEOUT_AP    : 3000 ms</div>
<div class="t" style="left:788.0px;top:369.8px;font-size:12.40px;line-height:16px;font-family:'Liberation Mono';color:#101010;letter-spacing:0.56px;-webkit-text-stroke:0.25px;">INI_TIMEOUT_EMU       : 0 ms</div>
<div class="t" style="left:788.0px;top:401.8px;font-size:12.40px;line-height:16px;font-family:'Liberation Mono';color:#fff;letter-spacing:0.56px;-webkit-text-stroke:0.25px;">-- Result -- View More Information in ECSD and CSD</div>
<div class="t" style="left:788.0px;top:449.8px;font-size:12.40px;line-height:16px;font-family:'Liberation Mono';color:#000;width:528px;overflow:hidden;letter-spacing:0.56px;-webkit-text-stroke:0.25px;">1 . The whole Permanent write-protected, it can only be read .Cannot</div>
<div class="t" style="left:24.3px;top:562.0px;font-size:12.00px;line-height:15px;font-family:'Liberation Sans';color:#000;transform:scaleX(1.016);transform-origin:0 50%;">Опции</div>
<div class="t" style="left:38.0px;top:588.9px;font-size:12.00px;line-height:15px;font-family:'Liberation Sans';color:#000;transform:scaleX(1.019);transform-origin:0 50%;">Проверка контакта PIN</div>
<div class="t" style="left:182.0px;top:588.9px;font-size:12.00px;line-height:15px;font-family:'Liberation Sans';color:#a0a0a0;transform:scaleX(1.027);transform-origin:0 50%;">Проверять ID</div>
<div class="t" style="left:38.0px;top:612.3px;font-size:12.00px;line-height:15px;font-family:'Liberation Sans';color:#a0a0a0;transform:scaleX(1.009);transform-origin:0 50%;">Стереть до</div>
<div class="t" style="left:38.0px;top:635.5px;font-size:12.00px;line-height:15px;font-family:'Liberation Sans';color:#a0a0a0;transform:scaleX(0.991);transform-origin:0 50%;">Срав.после</div>
<div class="t" style="left:38.0px;top:658.3px;font-size:12.00px;line-height:15px;font-family:'Liberation Sans';color:#a0a0a0;transform:scaleX(0.991);transform-origin:0 50%;">Пропуск FF</div>
<div class="t" style="left:38.0px;top:681.1px;font-size:12.00px;line-height:15px;font-family:'Liberation Sans';color:#a0a0a0;transform:scaleX(1.055);transform-origin:0 50%;">Тест чистоты</div>
<div class="t" style="left:182.0px;top:635.5px;font-size:12.00px;line-height:15px;font-family:'Liberation Sans';color:#a0a0a0;transform:scaleX(1.013);transform-origin:0 50%;">Задать сер.№</div>
<div class="t" style="left:165.0px;top:658.5px;font-size:12.00px;line-height:15px;font-family:'Liberation Sans';color:#a0a0a0;transform:scaleX(0.973);transform-origin:0 50%;">Диапазон:</div>
<div class="t" style="left:251.8px;top:659.0px;font-size:12.00px;line-height:15px;font-family:'Liberation Sans';color:#a0a0a0;transform:scaleX(0.977);transform-origin:0 50%;">Все</div>
<div class="t" style="left:311.9px;top:659.0px;font-size:12.00px;line-height:15px;font-family:'Liberation Sans';color:#a0a0a0;transform:scaleX(1.037);transform-origin:0 50%;">Блок</div>
<div class="t" style="left:165.4px;top:682.5px;font-size:12.00px;line-height:15px;font-family:'Liberation Sans';color:#000;transform:scaleX(0.915);transform-origin:0 50%;">0x</div>
<div class="t" style="left:181.0px;top:684.0px;font-size:12.00px;line-height:15px;font-family:'Liberation Sans';color:#6d6d6d;width:69px;text-align:center;">00000000</div>
<div class="t" style="left:259.0px;top:682.5px;font-size:12.00px;line-height:15px;font-family:'Liberation Sans';color:#000;transform:scaleX(1.091);transform-origin:0 50%;">-&gt;</div>
<div class="t" style="left:279.0px;top:684.0px;font-size:12.00px;line-height:15px;font-family:'Liberation Sans';color:#6d6d6d;width:69px;text-align:center;">000001FF</div>
<div class="t" style="left:409.3px;top:562.3px;font-size:12.00px;line-height:15px;font-family:'Liberation Sans';color:#000;transform:scaleX(1.030);transform-origin:0 50%;">Конфигурация микросхемы</div>
<div class="t" style="left:1190.0px;top:661.1px;font-size:12.40px;line-height:16px;font-family:'Liberation Mono';color:#000;letter-spacing:0.56px;-webkit-text-stroke:0.25px;">Analysys IC</div>
<div class="t" style="left:3.5px;top:711.5px;font-size:12.00px;line-height:15px;font-family:'Liberation Sans';color:#000;transform:scaleX(0.908);transform-origin:0 50%;">Ready</div>
<div class="t" style="left:391.7px;top:708.8px;font-size:12.40px;line-height:16px;font-family:'Liberation Mono';color:#000;letter-spacing:0.56px;-webkit-text-stroke:0.25px;">Default Programmer(1): XGecu T56</div>
<div class="t" style="left:1246.5px;top:710.9px;font-size:12.00px;line-height:15px;font-family:'Liberation Sans';color:#000;transform:scaleX(0.890);transform-origin:0 50%;">0000 0000</div>
<div class="t" style="left:88.3px;top:739.2px;font-size:15.00px;line-height:19px;font-family:'Liberation Sans';color:#333;">Щоби почати пошук, введіть запит тут</div>
<div class="t" style="left:1217.0px;top:739.8px;font-size:12.50px;line-height:16px;font-family:'Liberation Sans';color:#fff;transform:scaleX(0.842);transform-origin:0 50%;">ENG</div>
<div class="t" style="left:1265.3px;top:731.0px;font-size:12.50px;line-height:16px;font-family:'Liberation Sans';color:#fff;transform:scaleX(0.898);transform-origin:0 50%;">23:27</div>
<div class="t" style="left:1253.2px;top:748.6px;font-size:12.50px;line-height:16px;font-family:'Liberation Sans';color:#fff;transform:scaleX(0.857);transform-origin:0 50%;">13.05.2023</div>
<div class="a" style="left:20px;top:518px;width:752px;height:1px;background:#e3e3e3"></div>
<div class="a" style="left:19px;top:519px;width:755px;height:1px;background:#fff"></div>
<div class="a" style="left:18px;top:520px;width:756px;height:1px;background:#f0f0f0"></div>
<div class="a" style="left:17px;top:521px;width:758px;height:1px;background:#fff"></div>
<div class="a" style="left:16px;top:522px;width:760px;height:5px;background:#f0f0f0"></div>
<svg class="a" style="left:0;top:0" width="1366" height="768"><path d="M828.3 435.0 L822.8 438.7 L817.3 446.9 L811.9 456.0 L811.4 461.5 L815.5 467.8 L820.0 473.3 L830.0 477.0 L847.4 481.0 L869.3 481.0 L872.0 482.4 L910.0 482.3 L913.0 483.6 L1007.4 483.6 L1011.8 482.1 L1055.7 482.1 L1058.6 483.6 L1070.3 483.6 L1073.3 485.5 L1078.8 485.8 L1122.7 485.8 L1128.2 484.5 L1148.4 484.5 L1155.7 488.0 L1256.3 488.0 L1274.6 485.8 L1292.9 480.3 L1305.7 478.4 L1307.6 475.7" stroke="#000" stroke-width="3.2" fill="none" stroke-linecap="round" stroke-linejoin="round"/></svg>
</body></html>
